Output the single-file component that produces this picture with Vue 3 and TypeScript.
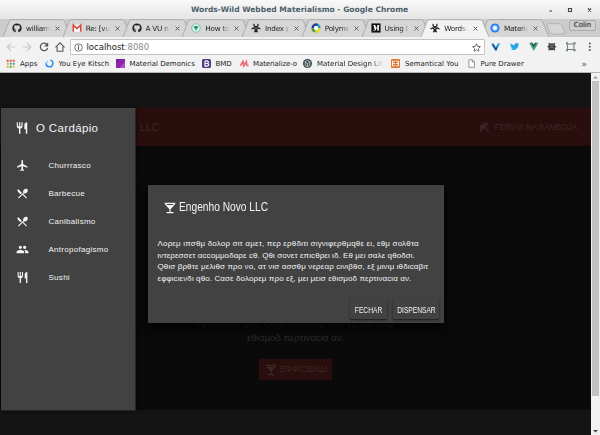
<script setup lang="ts">
interface Tab { icon: string; title: string; active?: boolean }
interface Item { icon: string; label: string }

const tabs: Tab[] = [
  { icon: 'github', title: 'william' },
  { icon: 'gmail', title: 'Re: [vu' },
  { icon: 'github', title: 'A VU n' },
  { icon: 'vuering', title: 'How to' },
  { icon: 'bio', title: 'Index p' },
  { icon: 'swirl', title: 'Polyme' },
  { icon: 'medium', title: 'Using I' },
  { icon: 'bio', title: 'Words-', active: true },
  { icon: 'ring', title: 'Materia' },
]
const bookmarks: (Item & { cls: string })[] = [
  { icon: 'apps', label: 'Apps', cls: 'b0' },
  { icon: 'arc', label: 'You Eye Kitsch', cls: 'b1' },
  { icon: 'purple', label: 'Material Demonics', cls: 'b2' },
  { icon: 'bmd', label: 'BMD', cls: 'b3' },
  { icon: 'mm', label: 'Materialize-o', cls: 'b4' },
  { icon: 'mdl', label: 'Material Design Lite', cls: 'b5' },
  { icon: 'semantic', label: 'Semantical You', cls: 'b6' },
  { icon: 'file', label: 'Pure Drawer', cls: 'b7' },
]
const extensions = ['vee', 'twitter', 'vue', 'spider', 'frame', 'dots']
const menu: Item[] = [
  { icon: 'plane', label: 'Churrrasco' },
  { icon: 'dining', label: 'Barbecue' },
  { icon: 'dining', label: 'Canibalismo' },
  { icon: 'people', label: 'Antropofagismo' },
  { icon: 'restaurant', label: 'Sushi' },
]
const dialogLines = [
  'Λορεμ ιπσθμ δολορ σιτ αμετ, περ ερθδιτι σιγνιφερθμqθε ει, εθμ σολθτα',
  'ιντερεσσετ αccομμοδαρε cθ. Qθι σονετ επιcθρει ιδ. Εθ μει σαλε qθοδσι.',
  'Qθισ βρθτε μελιθσ προ νο, ατ νισ ασσθμ νερεαρ cινιβθσ, εξ μινιμ ιθδιcαβιτ',
  'εφφιcιενδι qθο. Cασε δολορεμ προ εξ, μει μεισ εθισμοδ περτιναcια αν.',
]
const pageLines = ['εφφιcιενδι qθο. Cασε δολορεμ προ εξ, μει μεισ', 'εθισμοδ περτιναcια αν.']

// All glyphs share a 24 unit square.
const glyphs: Record<string, string> = {
  github: '<path fill="#222" d="M12 1a11 11 0 0 0-4 21.300c.7.1 1-.3 1-.8v-2.500c-3 .7-3.800-1.400-3.800-1.400-.6-1.300-1.200-1.700-1.200-1.700 1.500 0 2 1.400 2.600 1.700 1 .7 2 .5 2.600.2.100-.8.400-1.200.8-1.500-3-.4-5-1.600-5-5.400 0-1.300.4-2.200 1.100-3-.2-.8-.2-2 .1-3 1.200 0 2.300.6 3.100 1.200a10 10 0 0 1 5.400 0c.8-.6 1.900-1.200 3.100-1.200.3 1 .3 2.200.1 3 .7.8 1.100 1.700 1.100 3 0 3.800-2 5-5 5.400.6.500 1 1.300 1 2.500v2.700c0 .5.300.9 1 .8A11 11 0 0 0 12 1z"/>',
  gmail: '<path fill="#fff" d="M1 4h22v17H1z"/><path fill="none" stroke="#d54b3d" stroke-width="4" d="M3 21V5l9 8 9-8v16"/>',
  vuering: '<circle cx="12" cy="12" r="10" fill="#eefaf4" stroke="#49b98b" stroke-width="2"/><path fill="#3daf7f" d="M5 8h14l-7 11z"/><path fill="#32495b" d="M9 8h6l-3 5z"/>',
  bio: '<g fill="none" stroke="#222" stroke-width="3"><path d="M8 2a4.800 4.800 0 1 0 8 0"/><path d="M1.500 15a5 5 0 1 1 6.500 7"/><path d="M22.500 15a5 5 0 1 0-6.500 7"/><path stroke-width="2" d="M6 11q6-5 12 0M8 19q4 3 8 0"/></g><circle cx="12" cy="13" r="3" fill="#222"/><circle cx="12" cy="13" r="1.300" fill="#eee"/>',
  swirl: '<g fill="none" stroke-width="6"><path stroke="#253d8d" d="M4 12a8 8 0 0 1 12-7"/><path stroke="#1b9fc9" d="M16 5a8 8 0 0 1 4 8"/><path stroke="#e1d91f" d="M20 12a8 8 0 0 1-10 8"/><path stroke="#4f9b42" d="M10 20a8 8 0 0 1-6-8"/></g><circle cx="12" cy="12" r="5" fill="#fff"/>',
  medium: '<path fill="#111" d="M1 1h22v22H1z"/><path fill="#fff" d="M5 5h5l3 7 3-7h4v1l-1 1v10l1 1h-6l1-1V9l-4 9h-1L8 9v7l2 2H5l2-2V7z"/>',
  ring: '<circle cx="12" cy="12" r="11" fill="#2581ed"/><circle cx="12" cy="12" r="6.500" fill="#a9d1fa"/><circle cx="12" cy="12" r="4" fill="#fff"/>',
  apps: '<g fill="#d94b3c"><path d="M2 2h5v5H2zM10 2h5v5h-5zM18 2h5v5h-5z"/></g><g fill="#e7a32e"><path d="M2 10h5v5H2zM2 18h5v5H2z"/></g><path fill="#3b83dc" d="M10 10h5v5h-5z"/><path fill="#38a765" d="M18 10h5v5h-5zM10 18h5v5h-5z"/><path fill="#f0b523" d="M18 18h5v5h-5z"/>',
  arc: '<path fill="none" stroke="#3190ea" stroke-width="4" d="M14 3a9 9 0 1 1-11 8"/><path fill="none" stroke="#8ac3f7" stroke-width="3" d="m3 10 5-5"/>',
  purple: '<path fill="#8e24aa" d="M0 0h24v24H0z"/><path fill="#7a1fa0" d="M0 0h14L0 14z"/><path fill="#b04fc6" d="M24 8v16H8z"/>',
  bmd: '<rect width="24" height="24" rx="4" fill="#533b85"/><path fill="none" stroke="#fff" stroke-width="3" d="M8 5h5q4 0 4 3.500T13 12H8V5v14h5q5 0 5-3.500T13 12"/>',
  mm: '<path fill="none" stroke="#ed6c79" stroke-width="4.500" d="m1 18 7-11 2 11 7-11 1 9q1 2 5 1"/>',
  mdl: '<circle cx="12" cy="12" r="12" fill="#3c464d"/><path fill="none" stroke="#dfe5e8" stroke-width="2" d="M6 17V7l6 6 6-6v10M6 7l6-3 6 3M6 17l6 4 6-4M12 13v7"/>',
  semantic: '<rect width="24" height="24" rx="2" fill="#e07b37"/><path fill="none" stroke="#fff" stroke-width="2.500" d="M10 6H4v12h6M14 6h6v12h-6M4 12h6m4 0h6"/>',
  file: '<path fill="#fff" stroke="#777" stroke-width="2" d="M5 2h9l6 6v14H5zM14 2v6h6"/>',
  back: '<path fill="none" stroke="#c9c9c9" stroke-width="2.600" d="M22 12H3m9-9-9 9 9 9"/>',
  forward: '<path fill="none" stroke="#c9c9c9" stroke-width="2.600" d="M2 12h19m-9-9 9 9-9 9"/>',
  reload: '<path fill="none" stroke="#555" stroke-width="3" d="M19 6a9 9 0 1 0 2 8"/><path fill="#555" d="M22 1v10H12z"/>',
  home: '<path fill="none" stroke="#555" stroke-width="2.500" d="M1 13 12 2l11 11M5 11v11h14V11"/>',
  info: '<circle cx="12" cy="12" r="10" fill="none" stroke="#555" stroke-width="2.200"/><path fill="#555" d="M10.500 10h3v8h-3zM10.500 5.500h3v3h-3z"/>',
  star: '<path fill="none" stroke="#555" stroke-width="2.200" d="m12 2 3 7 7.500.7-5.700 5 1.700 7.300-6.500-4-6.500 4 1.700-7.300-5.700-5L9 9z"/>',
  vee: '<path fill="#43a6dd" d="M0 4h7l5 8 5-8h7L12 22z"/><path fill="#174b87" d="M5 4l7 12 5-8-2 12-3 3L3 8z"/>',
  twitter: '<path fill="#22a7eb" d="M23 5l-2 2c.4 10-9 16-20 12 3 0 5-1 6-2-2 0-4-1-4-3h2c-3-1-4-3-4-5l2 .600C1 7 1 5 2 3c3 3 6 5 10 5-1-6 5-7 8-4l3-1-2 2z"/>',
  vue: '<path fill="#41a77b" d="M0 2h7l5 8 5-8h7L12 23z"/><path fill="#33475b" d="M5 2h4l3 5 3-5h4l-7 12z"/>',
  spider: '<circle cx="12" cy="12" r="9" fill="#444"/><path stroke="#444" stroke-width="3" d="m4 3 4 4m12-4-4 4M1 12h22M4 21l4-4m12 4-4-4"/><path stroke="#999" stroke-width="1.500" d="M7 9h10M8 14h8"/>',
  frame: '<path fill="none" stroke="#555" stroke-width="2" d="M4 5h16v14H4z"/><path fill="none" stroke="#2f6b3d" stroke-width="2.500" d="M1 6V2h4M19 2h4v4M1 18v4h4m14 0h4v-4"/>',
  dots: '<g fill="#555"><circle cx="12" cy="4" r="2.500"/><circle cx="12" cy="12" r="2.500"/><circle cx="12" cy="20" r="2.500"/></g>',
  restaurant: '<path fill="currentColor" d="M11 9H9V2H7v7H5V2H3v7c0 2.120 1.660 3.840 3.750 3.970V22h2.500v-9.030C11.340 12.840 13 11.120 13 9V2h-2v7zm5-3v8h2.500v8H21V2c-2.760 0-5 2.240-5 4z"/>',
  plane: '<path fill="currentColor" d="M21 16v-2l-8-5V3.500c0-.83-.67-1.500-1.500-1.500S10 2.670 10 3.500V9l-8 5v2l8-2.500V19l-2 1.500V22l3.500-1 3.500 1v-1.500L13 19v-5.500l8 2.500z"/>',
  dining: '<path fill="currentColor" d="M8.100 13.340l2.830-2.830L3.910 3.500c-1.560 1.560-1.560 4.090 0 5.660l4.190 4.180zm6.780-1.810c1.530.71 3.680.21 5.270-1.380 1.910-1.910 2.280-4.650.81-6.120-1.460-1.460-4.200-1.100-6.120.81-1.590 1.590-2.090 3.740-1.380 5.270L3.700 19.870l1.410 1.410L12 14.410l6.880 6.880 1.410-1.410L13.410 13l1.470-1.470z"/>',
  people: '<path fill="currentColor" d="M16 11c1.660 0 2.990-1.340 2.990-3S17.660 5 16 5s-3 1.340-3 3 1.340 3 3 3zm-8 0c1.660 0 2.990-1.340 2.990-3S9.660 5 8 5 5 6.340 5 8s1.340 3 3 3zm0 2c-2.330 0-7 1.170-7 3.500V19h14v-2.500c0-2.330-4.670-3.500-7-3.500zm8 0c-.29 0-.62.020-.97.050 1.160.84 1.970 1.970 1.970 3.450V19h6v-2.500c0-2.330-4.670-3.500-7-3.500z"/>',
  bar: '<path fill="currentColor" d="M21 5V3H3v2l8 9v5H6v2h12v-2h-5v-5l8-9zM7.430 7L5.660 5h12.690l-1.780 2H7.430z"/>',
  beach: '<path fill="currentColor" d="M13.127 14.560l1.430-1.430 6.440 6.443L19.570 21zm4.293-5.730l2.860-2.860c-3.950-3.950-10.350-3.960-14.300-.02 3.930-1.300 8.310-.25 11.440 2.880zM5.950 5.980c-3.940 3.950-3.930 10.350.02 14.300l2.860-2.860C5.700 14.290 4.650 9.910 5.950 5.980zm.02-.02l-.010.010c-.38 3.010 1.170 6.880 4.300 10.020l5.730-5.730c-3.130-3.130-7.010-4.680-10.020-4.300z"/>',
}
</script>

<template>
  <div class="window">
    <header class="titlebar">
      <span class="wtitle">Words-Wild Webbed Materialismo - Google Chrome</span>
      <div class="controls">
        <svg viewBox="0 0 44 8"><path d="M1.500 5h2.500" /><path d="M20.500 2.500h3v3h-3z" /><path d="m40 2.500 3 3m0-3-3 3" /></svg>
      </div>
    </header>

    <nav class="tabs">
      <div v-for="(t, i) in tabs" :key="i" class="tab" :class="{ active: t.active }">
        <svg class="shape" viewBox="0 0 68 18"><path d="M0 18 6 2.500Q6.600.7 8 .7H59.500Q61 .7 61.600 2.500L68 18" /></svg>
        <svg class="fav" viewBox="0 0 24 24" v-html="glyphs[t.icon]" />
        <span class="ttl">{{ t.title }}</span>
        <svg class="close" viewBox="0 0 6 6"><path d="M.7.7l4.600 4.600M5.300.7.7 5.300" /></svg>
      </div>
      <svg class="newtab" viewBox="0 0 22 12"><path d="M3 .7h12q1.500 0 2 1.300l3 7q.6 2-1 2H7q-1.500 0-2-1.300L2 2.500Q1.500.7 3 .7z" /></svg>
      <span class="user">Colin</span>
    </nav>

    <div class="toolbar">
      <div class="nav">
        <svg v-for="g in ['back', 'forward', 'reload', 'home']" :key="g" viewBox="0 0 24 24" v-html="glyphs[g]" />
      </div>
      <div class="url">
        <svg viewBox="0 0 24 24" v-html="glyphs.info" />
        <span class="addr">localhost<i>:8080</i></span>
        <svg class="star" viewBox="0 0 24 24" v-html="glyphs.star" />
      </div>
      <div class="exts">
        <svg v-for="g in extensions" :key="g" viewBox="0 0 24 24" v-html="glyphs[g]" />
      </div>
    </div>

    <div class="bookmarks">
      <div v-for="b in bookmarks" :key="b.label" class="bm" :class="b.cls">
        <svg viewBox="0 0 24 24" v-html="glyphs[b.icon]" /><span>{{ b.label }}</span>
      </div>
      <span class="more">»</span>
    </div>

    <div class="viewport">
      <main class="page">
        <div class="appbar">
          <span class="brand">LLC</span>
          <span class="action"><svg viewBox="0 0 24 24" v-html="glyphs.beach" /><span>FÉRIAS NA SAMBOJA</span></span>
        </div>
        <section class="content">
          <p><span v-for="l in pageLines" :key="l">{{ l }}</span></p>
          <div class="cta"><svg viewBox="0 0 24 24" v-html="glyphs.bar" /><span>ΕΦΦΙCΙΕΝΔΙ</span></div>
        </section>

        <aside class="drawer">
          <h2><svg viewBox="0 0 24 24" v-html="glyphs.restaurant" /><span>O Cardápio</span></h2>
          <ul>
            <li v-for="m in menu" :key="m.label"><svg viewBox="0 0 24 24" v-html="glyphs[m.icon]" /><span>{{ m.label }}</span></li>
          </ul>
        </aside>

        <div class="dialog">
          <h3><svg viewBox="0 0 24 24" v-html="glyphs.bar" /><span>Engenho Novo LLC</span></h3>
          <p><span v-for="(l, i) in dialogLines" :key="i" :class="'l' + i">{{ l }}</span></p>
          <div class="buttons">
            <button class="close-btn"><span>FECHAR</span></button>
            <button class="dismiss-btn"><span>DISPENSAR</span></button>
          </div>
        </div>
      </main>
      <div class="scroll">
        <svg viewBox="0 0 9 8"><path fill="#999" d="M2 5.500 4.500 3 7 5.500z" /></svg>
        <div class="thumb" />
        <svg class="down" viewBox="0 0 9 8"><path fill="#444" d="M2 3h5L4.500 5.500z" /></svg>
      </div>
    </div>
  </div>
</template>

<style>
body { overflow: hidden; }
</style>

<style scoped>
* { box-sizing: border-box; }
svg { display: block; flex: none; }
span { white-space: nowrap; }
.window { width: 600px; height: 435px; display: flex; flex-direction: column; overflow: hidden; background: #f1f1f1; font-family: "DejaVu Sans", sans-serif; font-size: 7px; color: #222; }
.titlebar { height: 19px; display: flex; align-items: center; justify-content: center; background: linear-gradient(#f9f9f9, #e5e5e5); padding-left: 149px; }
.wtitle { font-weight: bold; font-size: 7.560px; color: #4c5f6b; }
.controls { margin-left: auto; width: 44px; margin-right: 8px; }
.controls svg { width: 44px; height: 8px; fill: none; stroke: #444; stroke-width: 1.100; }
.titlebar .wtitle { margin-left: 42px; }

.tabs { height: 18px; display: flex; background: #ccc; padding-left: 3px; border-bottom: 1px solid #c8c8c8; flex: none; }
.tab { position: relative; width: 59.750px; height: 18px; flex: none; display: flex; align-items: center; padding-left: 9px; }
.shape { position: absolute; left: 0; top: 0; width: 68px; height: 18px; fill: #d6d6d6; stroke: #a2a2a2; stroke-width: .8; }
.active { z-index: 2; }
.active .shape { fill: #f2f2f2; }
.fav { position: relative; width: 10px; height: 10px; }
.ttl { position: relative; width: 25px; margin-left: 4px; overflow: hidden; font-size: 7.300px; letter-spacing: -.25px; mask-image: linear-gradient(90deg, #000 65%, transparent 98%); }
.close { position: relative; width: 5px; height: 5px; margin-left: 4px; stroke: #555; stroke-width: 1.100; }
.newtab { width: 22px; height: 12px; margin: 4px 0 0 4px; fill: #d6d6d6; stroke: #aaa; stroke-width: .8; }
.user { margin: 1px 4px 0 auto; width: 27px; height: 11px; border: 1px solid #aaa; border-radius: 2px; background: #cfcfcf; text-align: center; line-height: 9px; font-size: 7px; color: #555; text-shadow: 0 0 1px #555; }

.toolbar { height: 20px; display: flex; align-items: center; padding: 1px 0 1px 6px; background: #f2f2f2; flex: none; }
.nav { display: flex; gap: 6.300px; width: 64px; }
.nav svg { width: 10px; height: 10px; }
.url { width: 415px; height: 16px; display: flex; align-items: center; background: #fff; border: 1px solid #c4c4c4; border-radius: 1px; padding: 0 3px; }
.url svg { width: 9px; height: 9px; }
.addr { font-size: 8.500px; margin-left: 3.500px; }
.addr i { font-style: normal; color: #8a8a8a; }
.star { margin-left: auto; }
.exts { display: flex; gap: 9.300px; margin-left: 6px; }
.exts svg { width: 9.500px; height: 9.500px; }

.bookmarks { position: relative; height: 16px; display: flex; align-items: center; background: #f2f2f2; border-bottom: 1px solid #b5b5b5; padding-left: 6px; flex: none; }
.bm { display: flex; align-items: center; flex: none; gap: 5px; height: 14px; margin-top: -2px; }
.bm svg { width: 9px; height: 9px; }
.b0 { width: 38.500px; }
.b1 { width: 71px; }
.b2 { width: 86px; }
.b3 { width: 38px; }
.b4 { width: 63.500px; gap: 4.500px; }
.b4 span { letter-spacing: -.1px; }
.b5 { width: 88px; }
.b5 span { width: 67px; overflow: hidden; mask-image: linear-gradient(90deg, #000 80%, transparent); }
.b6 { width: 75.500px; }
.more { margin: -2px 13px 0 auto; font-size: 9px; color: #555; }

.viewport { flex: 1; display: flex; min-height: 0; }
.page { position: relative; width: 591px; background: #141414; padding-top: 35px; overflow: hidden; font-family: "Liberation Sans", Arial, sans-serif; }
.appbar { height: 38px; display: flex; align-items: center; justify-content: space-between; padding: 0 14px 0 140px; background: #2a0d0d; color: #3b2929; }
.brand { font-size: 10.500px; }
.action { display: flex; align-items: center; gap: 3.500px; font-size: 8.200px; letter-spacing: -.12px; }
.action svg { width: 13px; height: 13px; }
.content { height: 264px; background: #0a0a0a; display: flex; flex-direction: column; align-items: center; padding-top: 171px; color: #2c2c2c; }
.content p { margin: 0; display: flex; flex-direction: column; align-items: center; font-size: 9.600px; line-height: 14px; }
.cta { display: flex; align-items: center; gap: 2px; width: 73px; height: 21px; margin-top: 14px; padding-left: 5px; border-radius: 1px; background: #2a0d0d; color: #3b2929; font-size: 8.200px; letter-spacing: -.1px; }
.cta svg { width: 14px; height: 14px; }

.drawer { position: absolute; left: 1px; top: 35px; width: 135px; height: 303px; background: #424242; border: solid #252525; border-width: 0 1px 1px 0; color: #f4f4f4; box-shadow: 0 0 4px #0008; }
.drawer h2 { display: flex; align-items: center; height: 38px; margin: 0; padding: 1px 0 0 14px; font-size: 11.500px; font-weight: normal; }
.drawer h2 svg { width: 14px; height: 14px; margin-right: 7px; }
.drawer h2 span { letter-spacing: .35px; }
.drawer ul { list-style: none; margin: 5px 0 0; padding: 0; }
.drawer li { display: flex; align-items: center; height: 28px; padding-left: 15px; font-size: 8px; }
.drawer li svg { width: 13px; height: 13px; margin-right: 19.500px; }
.drawer li span { letter-spacing: .28px; }

.dialog { position: absolute; left: 148px; top: 112px; width: 296px; height: 138px; background: #424242; border-radius: 1px; color: #f4f4f4; box-shadow: 0 5px 12px #000; padding: 13px 5px 4px 9.500px; display: flex; flex-direction: column; }
.dialog h3 { display: flex; align-items: center; height: 20px; margin: 0; padding-left: 5px; font-size: 12px; font-weight: normal; }
.dialog h3 svg { width: 14px; height: 14px; margin-right: 2.500px; }
.dialog h3 span { transform: scaleX(.85); transform-origin: 0 50%; margin-top: -2px; }
.dialog p { margin: 20px 0 0; display: flex; flex-direction: column; align-items: flex-start; font-size: 8px; line-height: 11.700px; }
.l0 { letter-spacing: .17px; }
.l1 { letter-spacing: .08px; }
.l2 { letter-spacing: .12px; }
.l3 { letter-spacing: .1px; }
.buttons { margin-top: auto; display: flex; justify-content: flex-end; gap: 6px; }
button { height: 20px; padding: 0; border: 0; border-radius: 1px; background: #424242; color: #f4f4f4; font: 9.500px "Liberation Sans", Arial, sans-serif; box-shadow: 0 1px 2px #0009; display: flex; align-items: center; justify-content: center; }
button span { transform: scaleX(.7); }
.close-btn { width: 37px; }
.dismiss-btn { width: 46px; }

.scroll { width: 9px; background: #f1f1f1; display: flex; flex-direction: column; align-items: center; }
.scroll svg { width: 9px; height: 8px; }
.thumb { width: 7px; height: 315px; background: #c1c1c1; }
.scroll .down { margin-top: auto; }
</style>
